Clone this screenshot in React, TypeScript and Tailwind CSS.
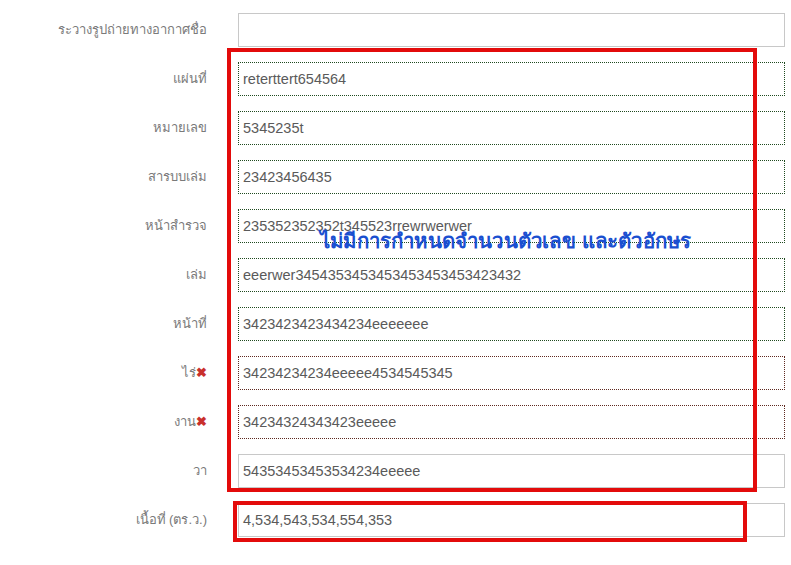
type Row = {
    label: string;
    value: string;
    border: 'solid' | 'green' | 'brown';
    required?: boolean;
};

const rows: Row[] = [
    { label: 'ระวางรูปถ่ายทางอากาศชื่อ', value: '', border: 'solid' },
    { label: 'แผ่นที่', value: 'reterttert654564', border: 'green' },
    { label: 'หมายเลข', value: '5345235t', border: 'green' },
    { label: 'สารบบเล่ม', value: '23423456435', border: 'green' },
    { label: 'หน้าสำรวจ', value: '235352352352t345523rrewrwerwer', border: 'green' },
    { label: 'เล่ม', value: 'eeerwer3454353453453453453453423432', border: 'green' },
    { label: 'หน้าที่', value: '3423423423434234eeeeeee', border: 'green' },
    { label: 'ไร่', value: '34234234234eeeee4534545345', border: 'brown', required: true },
    { label: 'งาน', value: '34234324343423eeeee', border: 'brown', required: true },
    { label: 'วา', value: '54353453453534234eeeee', border: 'solid' },
    { label: 'เนื้อที่ (ตร.ว.)', value: '4,534,543,534,554,353', border: 'solid' },
];

const borderClass = {
    solid: 'border border-solid border-[#c8c8c8]',
    green: 'border border-dotted border-[#1f4a1f]',
    brown: 'border border-dotted border-[#5e2a20]',
};

export default function App() {
    return (
        <div className="relative w-[791px] h-[565px] bg-white overflow-hidden font-['Liberation_Sans',sans-serif]">
            <div className="pt-[13px] flex flex-col gap-[15px]">
                {rows.map((row) => (
                    <div key={row.label} className="flex items-center">
                        <div className="w-[208px] pr-[1px] text-right text-[13px] text-[#7a7a7a]">
                            {row.label}
                            {row.required && (
                                <span className="text-[#c9302c] font-bold text-[13px]">✖</span>
                            )}
                        </div>
                        <div
                            className={`ml-[30px] w-[547px] h-[34px] flex items-center px-[4px] pt-[2px] text-[14.5px] text-[#5a5a5a] ${borderClass[row.border]}`}
                        >
                            {row.value}
                        </div>
                    </div>
                ))}
            </div>

            {/* annotation overlays */}
            <div className="absolute left-[227px] top-[48px] w-[530px] h-[444px] border-[4px] border-[#e30b0b]" />
            <div className="absolute left-[233px] top-[501px] w-[514px] h-[41px] border-[4px] border-[#e30b0b]" />
            <div className="absolute left-[320px] top-[231px] text-[20.4px] font-bold text-[#1a4fd0] leading-none tracking-[0.2px]">
                ไม่มีการกำหนดจำนวนตัวเลข และตัวอักษร
            </div>
        </div>
    );
}
